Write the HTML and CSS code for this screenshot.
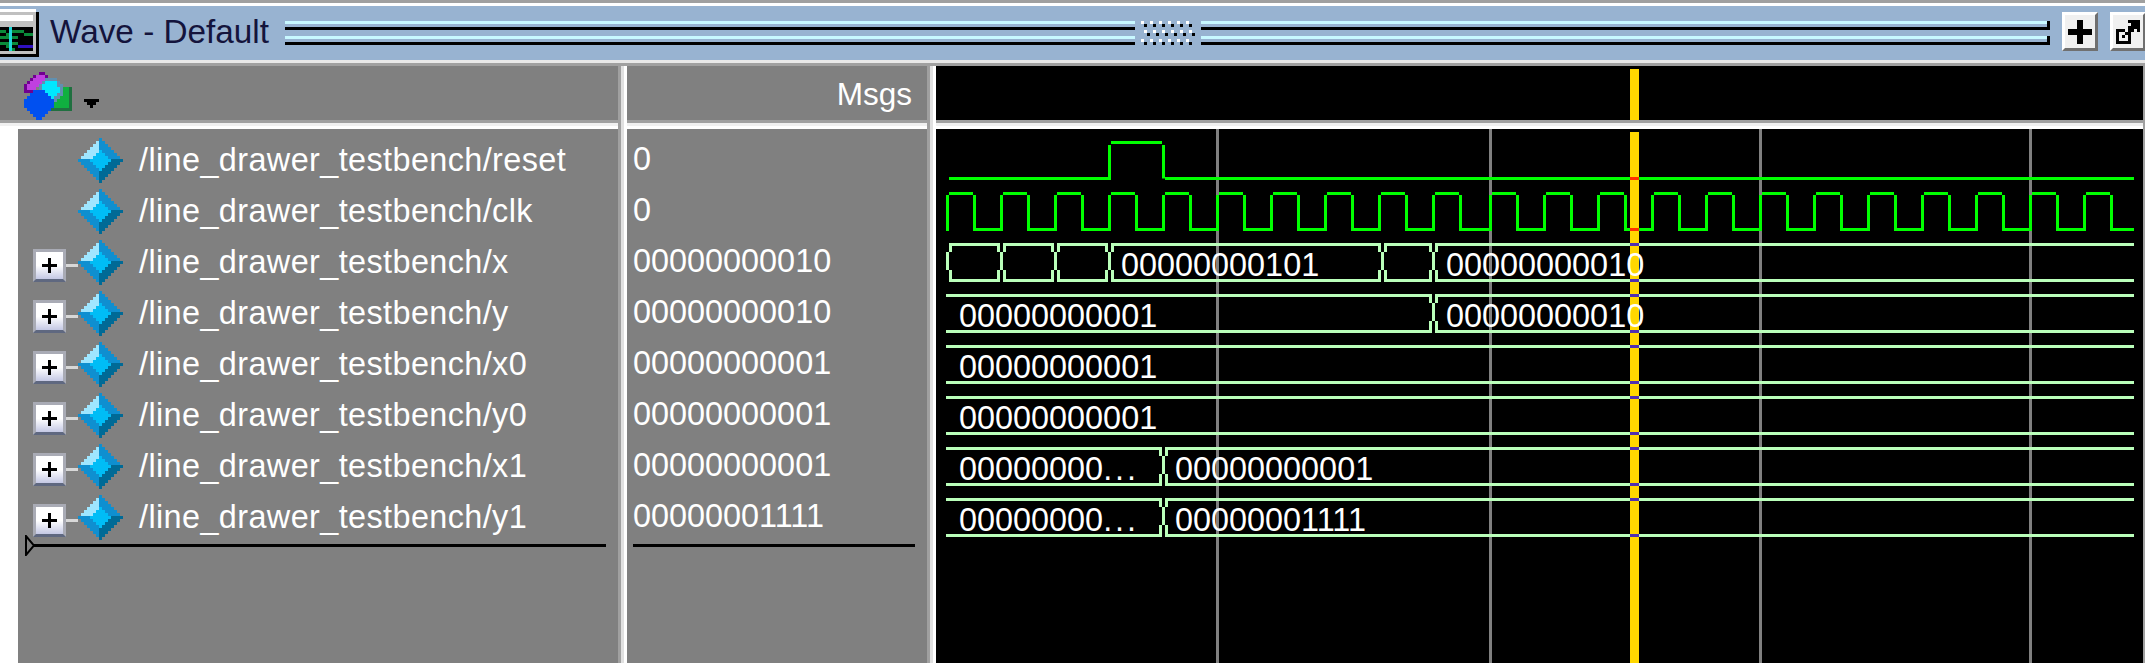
FILE: index.html
```html
<!DOCTYPE html>
<html lang="en">
<head>
    <meta charset="UTF-8">
    <title>Wave - Default</title>
    <link rel="stylesheet" href="styles.css">
</head>
<body>
    <svg class="sprite">
        <symbol id="signal" viewBox="0 0 15 15">
            <path stroke="#9fe6ff" d="M6 1.5h1M5 2.5h2M4 3.5h3M3 4.5h4M2 5.5h4M1 6.5h4"/>
            <path stroke="#0f8fd0" d="M7 .5h1M7 1.5h2M7 2.5h3M7 3.5h4M8 4.5h4M9 5.5h4M10 6.5h4M0 7.5h4M1 8.5h4M2 9.5h4M3 10.5h4M4 11.5h3M5 12.5h2M6 13.5h1"/>
            <path stroke="#006a96" d="M11 7.5h4M10 8.5h4M9 9.5h4M8 10.5h4M7 11.5h4M7 12.5h3M7 13.5h2M7 14.5h1"/>
            <path stroke="#00bdf6" d="M7 4.5h1M6 5.5h3M5 6.5h5M4 7.5h7M5 8.5h5M6 9.5h3M7 10.5h1"/>
        </symbol>
    </svg>

    <div class="titlebar">
        <svg class="win-icon" viewBox="0 0 13 16">
            <path stroke="#fff" d="M0 .5h12"/>
            <path stroke="#c0c0c0" d="M0 1.5h12M0 2.5h12M0 3.5h12M0 4.5h12M0 5.5h12M0 6.5h12M0 7.5h12M0 8.5h12M0 9.5h12M0 10.5h12M0 11.5h12M0 12.5h12M0 13.5h12M0 14.5h12"/>
            <path stroke="#fff" d="M0 2.5h11M0 3.5h11"/>
            <path stroke="#000" d="M12.500 1v15M0 15.5h13M0 6.5h11M0 7.5h11M0 8.5h11M0 9.5h11M0 10.5h11M0 11.5h11M0 12.5h11M0 13.5h11"/>
            <path stroke="#0a8a3a" d="M0 7.5h2M2 8.5h1M0 9.5h3M4 7.5h4M8 8.5h3M4 9.5h2M0 11.5h3M4 11.5h2M2 12.5h1M4 13.5h1"/>
            <path stroke="#20d8d8" d="M3.5 6v8"/>
            <path stroke="#3010c0" d="M6 12.5h5"/>
        </svg>
        <span class="title">Wave - Default</span>
        <div class="grip">
            <div class="grip-lines"><div class="grip-line"></div><div class="grip-line"></div></div>
            <svg class="grip-dots" viewBox="0 0 54 27">
                <path stroke="#fff" d="M0 1.5h3M9 1.5h3M18 1.5h3M27 1.5h3M36 1.5h3M45 1.5h3M3 10.5h3M12 10.5h3M21 10.5h3M30 10.5h3M39 10.5h3M48 10.5h3M0 19.5h3M9 19.5h3M18 19.5h3M27 19.5h3M36 19.5h3M45 19.5h3" stroke-width="3"/>
                <path stroke="#000" d="M3 4.5h3M12 4.5h3M21 4.5h3M30 4.5h3M39 4.5h3M48 4.5h3M6 13.5h3M15 13.5h3M24 13.5h3M33 13.5h3M42 13.5h3M51 13.5h3M3 22.5h3M12 22.5h3M21 22.5h3M30 22.5h3M39 22.5h3M48 22.5h3" stroke-width="3"/>
            </svg>
            <div class="grip-lines"><div class="grip-line end"></div><div class="grip-line end"></div></div>
        </div>
        <div class="tool-btn">
            <svg class="btn-icon" viewBox="0 0 24 24"><path stroke="#000" stroke-width="6" d="M12 0v24M0 12h24"/></svg>
        </div>
        <div class="tool-btn">
            <svg class="btn-icon" viewBox="0 0 8 8">
                <path stroke="#000" d="M4 .5h4M5 1.5h3M4 2.5h4M0 3.5h3M4 3.5h2M7 3.5h1M0 4.5h1M3 4.5h2M0 5.5h1M2 5.5h1M4 5.5h1M0 6.5h1M4 6.5h1M0 7.5h5"/>
            </svg>
        </div>
    </div>

    <div class="panes">
        <div class="pane pane-names">
            <div class="pane-head">
                <svg class="layout-icon" viewBox="0 0 16 16">
                    <path stroke="#700090" d="M5 .5h2M3 1.5h1M7 1.5h1M2 2.5h1M1 3.5h1M0 4.5h1M0 5.5h1M0 6.5h3"/>
                    <path stroke="#c040e0" d="M4 1.5h3M3 2.5h5M2 3.5h5M1 4.5h5M1 5.5h3"/>
                    <path stroke="#10b040" d="M9 5.5h6M9 6.5h6M9 7.5h6M9 8.5h6M9 9.5h6M9 10.5h6M9 11.5h6"/>
                    <path stroke="#207040" d="M15.500 5v8M9 12.5h7"/>
                    <path stroke="#6090b0" d="M7 2.5h4M6 3.5h6M5 4.5h8M5 5.5h8M5 6.5h8M5 7.5h8M6 8.5h6M7 9.5h4"/>
                    <path stroke="#00e8ff" d="M7 3.5h4M6 4.5h5M6 5.5h6M6 6.5h6M7 7.5h4M8 8.5h2"/>
                    <path stroke="#0050f0" d="M3 6.5h4M2 7.5h6M1 8.5h8M0 9.5h10M0 10.5h10M0 11.5h10M1 12.5h8M2 13.5h6M3 14.5h4M4 15.5h2"/>
                </svg>
                <svg class="drop-arrow" viewBox="0 0 5 3"><path stroke="#000" d="M0 .5h5M1 1.5h3M2 2.5h1"/></svg>
            </div>
            <div class="pane-split"></div>
            <div class="pane-body names-body">
                <div class="sig-row">
                    <div class="tog-slot"></div>
                    <svg class="sig-icon"><use href="#signal"/></svg>
                    <span class="sig-name">/line_drawer_testbench/reset</span>
                </div>
                <div class="sig-row">
                    <div class="tog-slot"></div>
                    <svg class="sig-icon"><use href="#signal"/></svg>
                    <span class="sig-name">/line_drawer_testbench/clk</span>
                </div>
                <div class="sig-row">
                    <div class="tog-slot"><div class="toggle"></div><div class="stub"></div></div>
                    <svg class="sig-icon"><use href="#signal"/></svg>
                    <span class="sig-name">/line_drawer_testbench/x</span>
                </div>
                <div class="sig-row">
                    <div class="tog-slot"><div class="toggle"></div><div class="stub"></div></div>
                    <svg class="sig-icon"><use href="#signal"/></svg>
                    <span class="sig-name">/line_drawer_testbench/y</span>
                </div>
                <div class="sig-row">
                    <div class="tog-slot"><div class="toggle"></div><div class="stub"></div></div>
                    <svg class="sig-icon"><use href="#signal"/></svg>
                    <span class="sig-name">/line_drawer_testbench/x0</span>
                </div>
                <div class="sig-row">
                    <div class="tog-slot"><div class="toggle"></div><div class="stub"></div></div>
                    <svg class="sig-icon"><use href="#signal"/></svg>
                    <span class="sig-name">/line_drawer_testbench/y0</span>
                </div>
                <div class="sig-row">
                    <div class="tog-slot"><div class="toggle"></div><div class="stub"></div></div>
                    <svg class="sig-icon"><use href="#signal"/></svg>
                    <span class="sig-name">/line_drawer_testbench/x1</span>
                </div>
                <div class="sig-row">
                    <div class="tog-slot"><div class="toggle"></div><div class="stub"></div></div>
                    <svg class="sig-icon"><use href="#signal"/></svg>
                    <span class="sig-name">/line_drawer_testbench/y1</span>
                </div>
                <div class="insert-line"></div>
                <svg class="insert-mark" viewBox="0 0 10 21"><path stroke="#000" stroke-width="2" d="M1 1v19l8-9.500z"/></svg>
            </div>
        </div>
        <div class="vsplit"></div>
        <div class="pane pane-values">
            <div class="pane-head msgs">Msgs</div>
            <div class="pane-split"></div>
            <div class="pane-body values-body">
                <div class="val-row">0</div>
                <div class="val-row">0</div>
                <div class="val-row">00000000010</div>
                <div class="val-row">00000000010</div>
                <div class="val-row">00000000001</div>
                <div class="val-row">00000000001</div>
                <div class="val-row">00000000001</div>
                <div class="val-row">00000001111</div>
                <div class="insert-line"></div>
            </div>
        </div>
        <div class="vsplit"></div>
        <div class="pane pane-wave">
            <div class="pane-head wave-head"><div class="cursor-head"></div></div>
            <div class="pane-split"></div>
            <svg class="wave" viewBox="936 129 1207 534">
                <defs>
                    <path id="clk" d="M1.500 231V195M3 193.500H27M28.500 195V231M27 229.500H55.500"/>
                    <path id="edge" d="M-1.500 3V9M1.500 9V27M-1.500 27V36M4.500 3V9M4.500 27V36"/>
                    <path id="start" d="M1.500 9V27M4.500 3V9M4.500 27V36"/>
                </defs>

                <path class="grid" d="M1217.500 129V663M1490.500 129V663M1760.500 129V663M2030.500 129V663"/>

                <!-- reset -->
                <path class="bit" d="M949 178.500H1109.500V145M1111 142.500H1162M1163.500 145V178.500M1165 178.500H2134"/>

                <!-- clk -->
                <g class="bit">
                    <use href="#clk" x="946"/><use href="#clk" x="1000"/><use href="#clk" x="1054"/>
                    <use href="#clk" x="1108"/><use href="#clk" x="1162"/><use href="#clk" x="1216"/>
                    <use href="#clk" x="1270"/><use href="#clk" x="1324"/><use href="#clk" x="1378"/>
                    <use href="#clk" x="1432"/><use href="#clk" x="1489"/><use href="#clk" x="1543"/>
                    <use href="#clk" x="1597"/><use href="#clk" x="1651"/><use href="#clk" x="1705"/>
                    <use href="#clk" x="1759"/><use href="#clk" x="1813"/><use href="#clk" x="1867"/>
                    <use href="#clk" x="1921"/><use href="#clk" x="1975"/><use href="#clk" x="2029"/>
                    <path d="M1486 229.500H1490M2084.500 231V195M2086 193.500H2110M2111.500 195V231M2110 229.500H2134"/>
                </g>

                <g class="bus">
                    <!-- x -->
                    <path d="M949 244.500H1000M1003 244.500H1054M1057 244.500H1108M1111 244.500H1381M1384 244.500H1432M1435 244.500H2134"/>
                    <path d="M949 280.500H1000M1003 280.500H1054M1057 280.500H1108M1111 280.500H1381M1384 280.500H1432M1435 280.500H2134"/>
                    <use href="#start" x="946" y="243"/><use href="#edge" x="1000" y="243"/><use href="#edge" x="1054" y="243"/>
                    <use href="#edge" x="1108" y="243"/><use href="#edge" x="1381" y="243"/><use href="#edge" x="1432" y="243"/>
                    <!-- y -->
                    <path d="M946 295.500H1432M1435 295.500H2134M946 331.500H1432M1435 331.500H2134"/>
                    <use href="#edge" x="1432" y="294"/>
                    <!-- x0, y0 -->
                    <path d="M946 346.500H2134M946 382.500H2134M946 397.500H2134M946 433.500H2134"/>
                    <!-- x1, y1 -->
                    <path d="M946 448.500H1162M1165 448.500H2134M946 484.500H1162M1165 484.500H2134"/>
                    <path d="M946 499.500H1162M1165 499.500H2134M946 535.500H1162M1165 535.500H2134"/>
                    <use href="#edge" x="1162" y="447"/>
                    <use href="#edge" x="1162" y="498"/>
                </g>

                <!-- cursor -->
                <rect class="cursor" x="1630" y="132" width="9" height="531"/>
                <path class="cross-bit" d="M1630 178.500h9M1630 229.500h9"/>
                <path class="cross-bus" d="M1630 244.500h9M1630 280.500h9M1630 295.500h9M1630 331.500h9M1630 346.500h9M1630 382.500h9M1630 397.500h9M1630 433.500h9M1630 448.500h9M1630 484.500h9M1630 499.500h9M1630 535.500h9"/>

                <text class="bus-val" x="1121" y="276">00000000101</text>
                <text class="bus-val" x="1446" y="276">00000000010</text>
                <text class="bus-val" x="959" y="327">00000000001</text>
                <text class="bus-val" x="1446" y="327">00000000010</text>
                <text class="bus-val" x="959" y="378">00000000001</text>
                <text class="bus-val" x="959" y="429">00000000001</text>
                <text class="bus-val" x="959" y="480">00000000<tspan class="dots">...</tspan></text>
                <text class="bus-val" x="1175" y="480">00000000001</text>
                <text class="bus-val" x="959" y="531">00000000<tspan class="dots">...</tspan></text>
                <text class="bus-val" x="1175" y="531">00000001111</text>
            </svg>
        </div>
    </div>
</body>
</html>
```

FILE: styles.css
```css
html, body {
    margin: 0;
    height: 100%;
    overflow: hidden;
}
body {
    width: 2145px;
    height: 663px;
    display: flex;
    flex-direction: column;
    font-family: "Liberation Sans", Arial, sans-serif;
    background: #fff;
}
svg path {
    fill: none;
}
.sprite {
    position: absolute;
    width: 0;
    height: 0;
}

/* title bar */
.titlebar {
    height: 54px;
    flex: none;
    display: flex;
    align-items: flex-start;
    background: #98b3d1;
    border-top: 3px solid #a0a0a0;
    box-shadow: inset 0 3px 0 #fff;
    padding-top: 3px;
    border-bottom: 3px solid #e8e8e8;
    overflow: hidden;
}
.win-icon {
    width: 39px;
    height: 48px;
    flex: none;
    margin-top: 3px;
}
.title {
    margin-left: 11px;
    width: 235px;
    flex: none;
    font-size: 33.3px;
    line-height: 52px;
    color: #14143c;
}
.grip {
    width: 1765px;
    flex: none;
    display: flex;
    align-items: flex-start;
    margin-top: 15px;
}
.grip-lines {
    flex: 1;
    display: flex;
    flex-direction: column;
    gap: 6px;
}
.grip-line {
    height: 9px;
    background: linear-gradient(#c8f8ff 3px, transparent 3px, transparent 6px, #000 6px);
}
.grip-line.end {
    box-shadow: 3px 0 0 #000;
    margin-right: 3px;
}
.grip-dots {
    width: 54px;
    height: 27px;
    flex: none;
    margin: 0 6px 0 6px;
}
.tool-btn {
    width: 30px;
    height: 33px;
    flex: none;
    margin: 6px 0 0 12px;
    display: flex;
    align-items: center;
    justify-content: center;
    background: #f0f0f0;
    border-style: solid;
    border-width: 3px;
    border-color: #fff #707070 #707070 #fff;
}
.btn-icon {
    width: 24px;
    height: 24px;
    flex: none;
}

/* panes */
.panes {
    flex: 1;
    display: flex;
    border-top: 3px solid #a0a0a0;
    min-height: 0;
}
.pane {
    display: flex;
    flex-direction: column;
}
.pane-names {
    width: 618px;
}
.pane-values {
    width: 300px;
}
.pane-wave {
    flex: 1;
    min-width: 0;
    border-right: 2px solid #a0a0a0;
}
.vsplit {
    width: 9px;
    flex: none;
    background: linear-gradient(90deg, #a0a0a0 3px, #e0e0e0 3px, #e0e0e0 6px, #fff 6px);
}
.pane-head {
    height: 54px;
    flex: none;
    background: #808080;
}
.pane-split {
    height: 9px;
    flex: none;
    background: linear-gradient(#a0a0a0 3px, #f0f0f0 3px, #f0f0f0 6px, #fff 6px);
}
.pane-body {
    flex: 1;
    background: #808080;
    padding-top: 5px;
    position: relative;
}

/* name column */
.pane-names .pane-head {
    display: flex;
    align-items: flex-start;
    padding: 6px 0 0 24px;
    box-sizing: border-box;
}
.layout-icon {
    width: 48px;
    height: 48px;
    flex: none;
}
.drop-arrow {
    width: 15px;
    height: 9px;
    flex: none;
    margin: 27px 0 0 12px;
}
.names-body {
    border-left: 18px solid #fff;
}
.sig-row {
    height: 51px;
    display: flex;
    align-items: center;
    padding-left: 15px;
}
.tog-slot {
    width: 45px;
    flex: none;
    display: flex;
    align-items: center;
    margin-top: 8px;
}
.toggle {
    width: 27px;
    height: 27px;
    flex: none;
    border-style: solid;
    border-width: 3px;
    border-color: #a9abb5 #a9abb5 #5f6880;
    background:
        linear-gradient(#000, #000) center / 15px 3px no-repeat,
        linear-gradient(#000, #000) center / 3px 15px no-repeat,
        linear-gradient(#fff 50%, #c4c8e4);
}
.stub {
    width: 12px;
    height: 3px;
    flex: none;
    background: #d8d8d8;
}
.sig-icon {
    width: 45px;
    height: 45px;
    flex: none;
    margin-top: 2px;
}
.sig-name {
    margin: 2px 0 0 16px;
    font-size: 32.4px;
    letter-spacing: 0.4px;
    line-height: 51px;
    color: #fff;
    white-space: nowrap;
}
.insert-line {
    height: 3px;
    margin: 2px 12px 0 15px;
    background: #000;
}
.insert-mark {
    position: absolute;
    left: 7px;
    top: 406px;
    width: 10px;
    height: 21px;
}

/* value column */
.msgs {
    padding-right: 15px;
    text-align: right;
    font-size: 31.5px;
    line-height: 56px;
    color: #fff;
}
.val-row {
    height: 51px;
    padding-left: 6px;
    font-size: 32.4px;
    line-height: 51px;
    color: #fff;
}
.values-body .insert-line {
    margin-left: 6px;
}

/* wave column */
.wave-head {
    background: #000;
    padding-left: 694px;
}
.cursor-head {
    width: 9px;
    height: 51px;
    margin-top: 3px;
    background: #ffd700;
    display: inline-block;
}
.wave {
    display: block;
    width: 1207px;
    height: 534px;
    background: #000;
}
.wave path {
    stroke-width: 3;
}
.grid {
    stroke: #808080;
}
.bit {
    stroke: #00ff00;
}
.bus {
    stroke: #baffba;
}
.cursor {
    fill: #ffd700;
}
.cross-bit {
    stroke: #ff3000;
}
.cross-bus {
    stroke: #5030b0;
}
.bus-val {
    font-size: 32.4px;
    fill: #fff;
}
.dots {
    letter-spacing: 3px;
}
```
